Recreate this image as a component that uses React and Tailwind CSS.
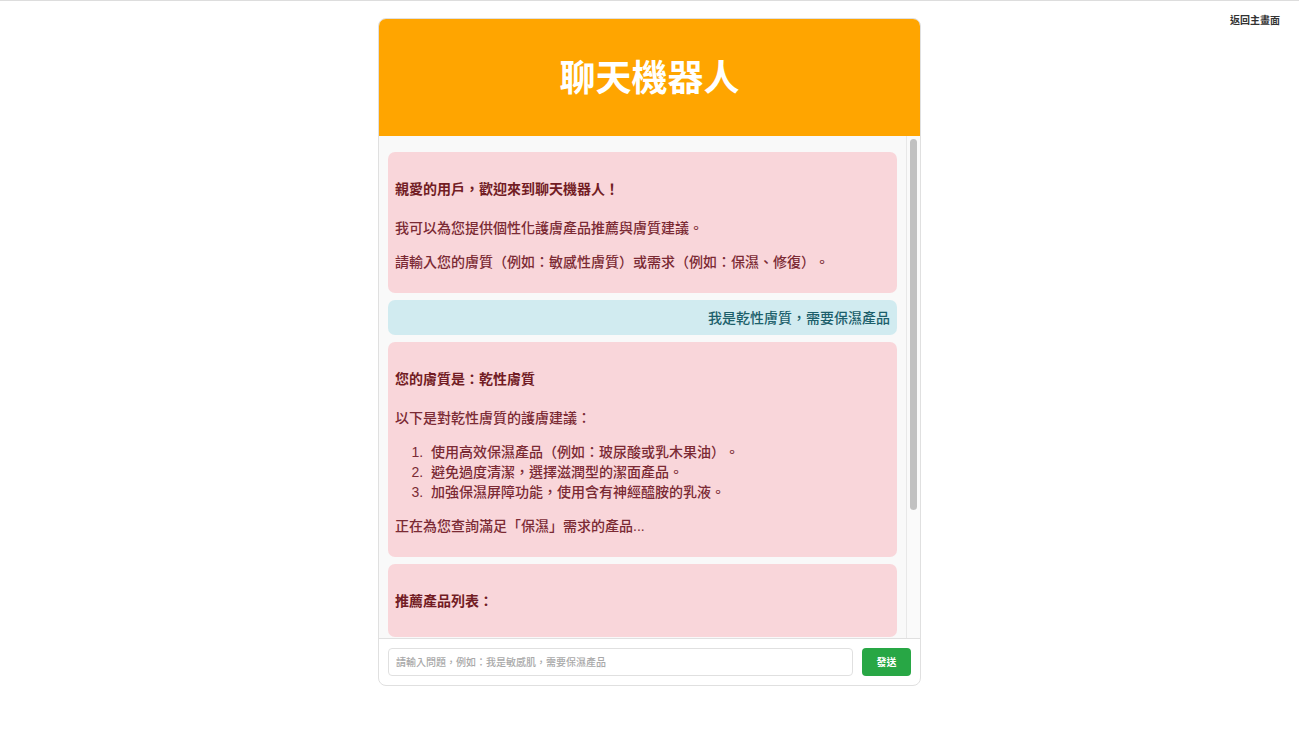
import React from "react";

const FONT = "font-['Liberation_Sans','Noto_Sans_CJK_TC',sans-serif]";

function BotMessage({ title, last, children }) {
  return (
    <article
      className={`rounded-[7px] bg-[#f9d6da] px-[7px] pt-[27px] text-[14px] leading-5 font-medium text-[#7b2a34] ${last ? "pb-[26px]" : "pb-[21px]"}`}
    >
      <h2 className="font-bold text-[#721c24]">{title}</h2>
      {children && <div className="mt-[19px] flex flex-col gap-[14px]">{children}</div>}
    </article>
  );
}

function UserMessage({ children }) {
  return (
    <article className="rounded-[7px] bg-[#d1ebf0] px-[7px] pt-[8px] pb-[7px] text-right text-[14px] leading-5 font-medium text-[#1c5f6b]">
      {children}
    </article>
  );
}

export default function App() {
  return (
    <div
      lang="zh-Hant"
      className={`grid min-h-screen grid-cols-[1fr_minmax(0,543px)_1fr] items-start border-t border-[#dddddd] bg-white [text-spacing-trim:space-all] ${FONT}`}
    >
      <main className="col-start-2 mt-[17px] overflow-hidden rounded-[8px] border border-[#e0e0e0] bg-white">
        <header className="bg-[#ffa500] pt-[37px] pb-[35px] text-center">
          <h1 className="text-[36px] leading-[45px] font-bold text-white">聊天機器人</h1>
        </header>

        <div className="flex bg-[#f9f9f9]">
          <div className="flex min-w-0 flex-1 flex-col gap-[7px] px-[9px] pt-4 pb-px">
            <BotMessage title="親愛的用戶，歡迎來到聊天機器人！">
              <p>我可以為您提供個性化護膚產品推薦與膚質建議。</p>
              <p>請輸入您的膚質（例如：敏感性膚質）或需求（例如：保濕、修復）。</p>
            </BotMessage>
            <UserMessage>我是乾性膚質，需要保濕產品</UserMessage>
            <BotMessage title="您的膚質是：乾性膚質">
              <p>以下是對乾性膚質的護膚建議：</p>
              <ol className="list-decimal pl-8">
                <li className="pl-1">使用高效保濕產品（例如：玻尿酸或乳木果油）。</li>
                <li className="pl-1">避免過度清潔，選擇滋潤型的潔面產品。</li>
                <li className="pl-1">加強保濕屏障功能，使用含有神經醯胺的乳液。</li>
              </ol>
              <p>正在為您查詢滿足「保濕」需求的產品...</p>
            </BotMessage>
            <BotMessage title="推薦產品列表：" last />
          </div>
          <div aria-hidden="true" className="flex w-[14px] justify-center border-l border-[#e8e8e8] bg-[#fafafa] pt-[3px]">
            <div className="h-[371px] w-[7px] rounded-full bg-[#c1c1c1]" />
          </div>
        </div>

        <form
          className="flex gap-[9px] border-t border-[#e0e0e0] p-[9px]"
          onSubmit={(e) => e.preventDefault()}
        >
          <input
            type="text"
            aria-label="輸入問題"
            placeholder="請輸入問題，例如：我是敏感肌，需要保濕產品"
            className="h-7 min-w-0 flex-1 rounded-[4px] border border-[#e0e0e0] bg-white px-[7px] text-[10px] font-medium text-[#333333] placeholder:text-[#a9a9a9]"
          />
          <button
            type="submit"
            className="h-7 w-[49px] rounded-[4px] bg-[#28a745] text-[10px] font-bold text-white"
          >
            發送
          </button>
        </form>
      </main>

      <nav className="col-start-3 flex justify-end pt-[13px] pr-[19px]">
        <a href="#" className="text-[10px] leading-[14px] font-bold text-[#333333]">
          返回主畫面
        </a>
      </nav>
    </div>
  );
}
